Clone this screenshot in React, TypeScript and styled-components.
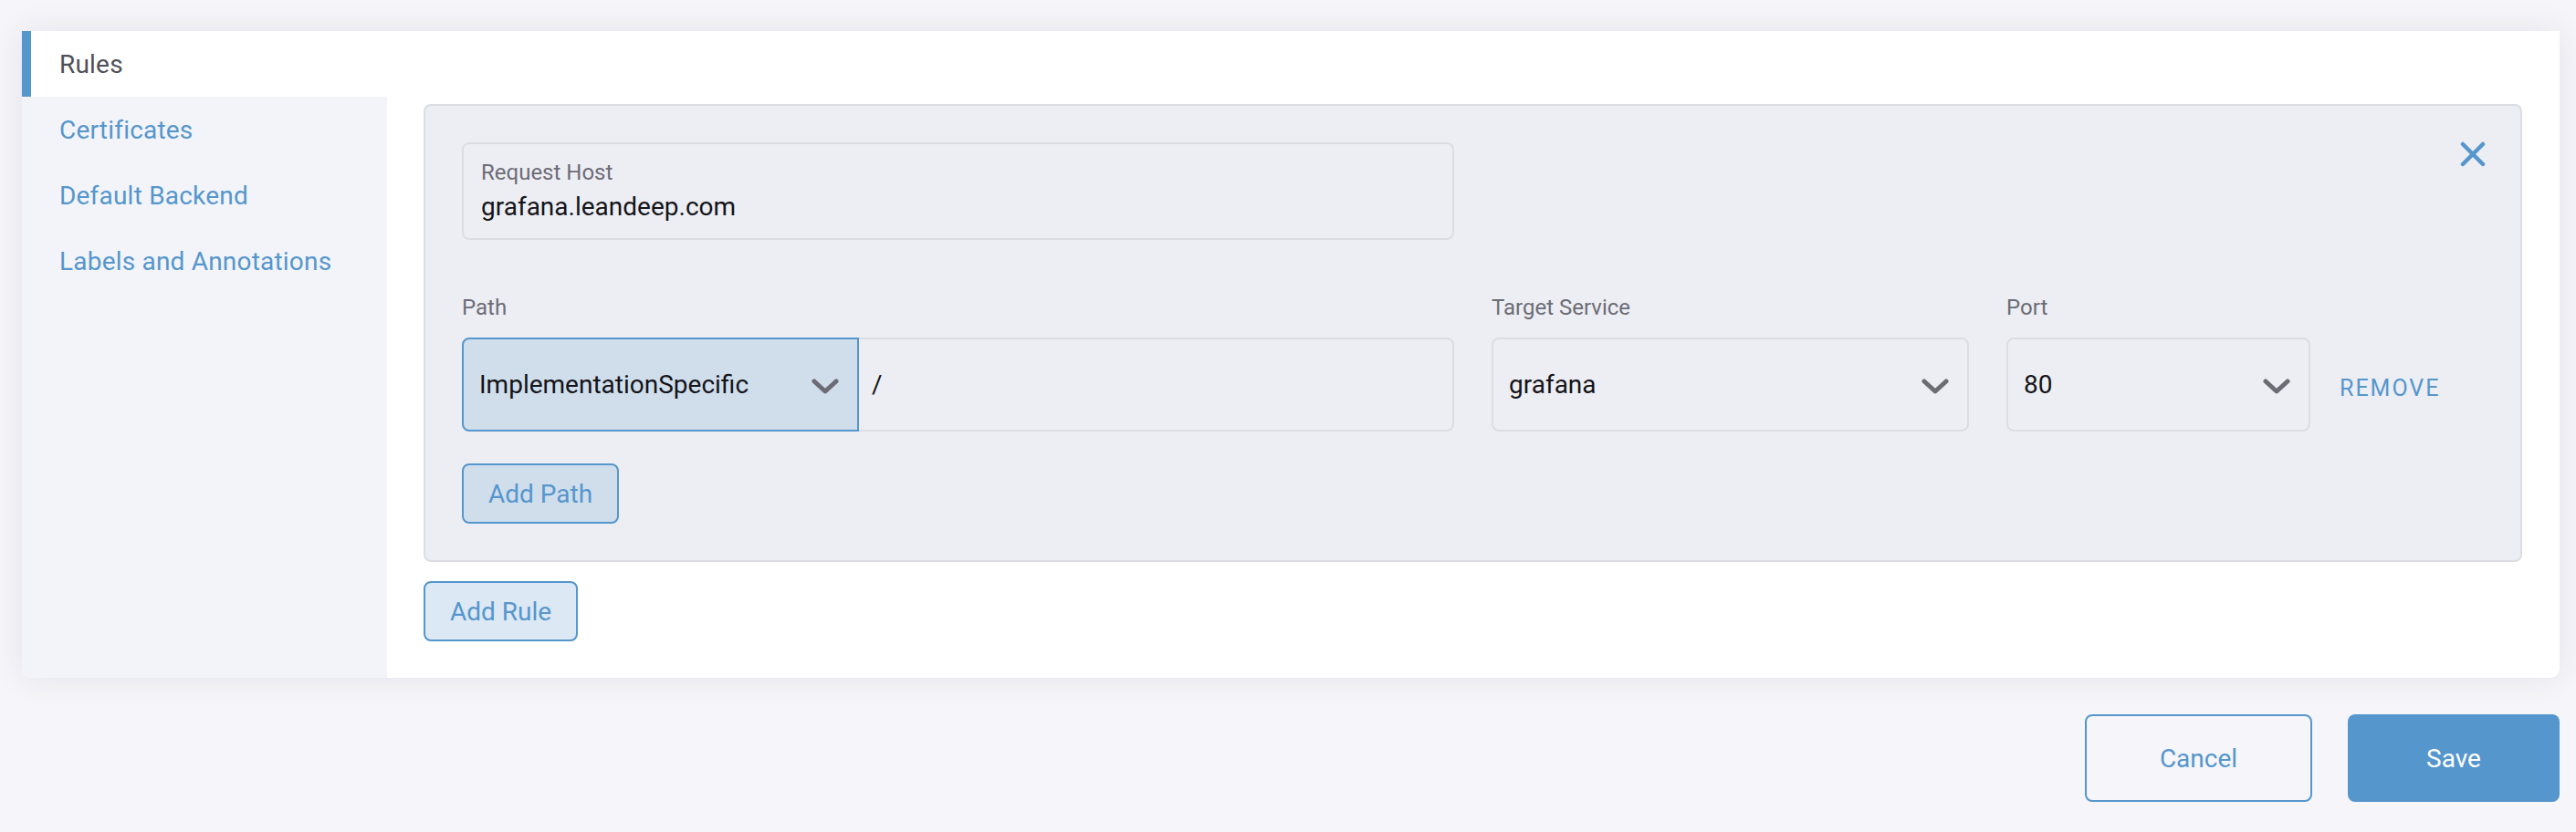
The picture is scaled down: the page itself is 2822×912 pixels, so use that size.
import React from 'react';
import styled, { createGlobalStyle } from 'styled-components';

const blue = '#5596cd';

const GlobalStyle = createGlobalStyle`
    html, body {
        margin: 0;
        padding: 0;
        background: #f5f5fa;
        font-family: Roboto, "Liberation Sans", sans-serif;
    }
    * {
        box-sizing: border-box;
    }
`

const tabs = ['Rules', 'Certificates', 'Default Backend', 'Labels and Annotations']

const Chevron = () => (
    <svg width='30' height='20' viewBox='0 0 30 20'>
        <polyline
            points='3,4 15,15 27,4'
            fill='none'
            stroke='#6c6c74'
            strokeWidth='5'
            strokeLinecap='round'
            strokeLinejoin='round'
        />
    </svg>
)

const CloseIcon = () => (
    <svg width='28' height='28' viewBox='0 0 28 28'>
        <path
            d='M3 3 L25 25 M25 3 L3 25'
            fill='none'
            stroke={blue}
            strokeWidth='4.5'
            strokeLinecap='round'
        />
    </svg>
)

export default function App() {
    return (
        <>
            <GlobalStyle />
            <Page>
                <Card>
                    <Sidebar>
                        {tabs.map((t, i) => (
                            <Tab key={t} $active={i === 0}>{t}</Tab>
                        ))}
                    </Sidebar>
                    <Content>
                        <RuleBox>
                            <HostRow>
                                <LabeledInput>
                                    <InputLabel>Request Host</InputLabel>
                                    <InputValue>grafana.leandeep.com</InputValue>
                                </LabeledInput>
                                <CloseButton>
                                    <CloseIcon />
                                </CloseButton>
                            </HostRow>

                            <PathGrid>
                                <ColLabel>Path</ColLabel>
                                <ColLabel>Target Service</ColLabel>
                                <ColLabel>Port</ColLabel>
                                <span />

                                <PathGroup>
                                    <Select $focused $width='435px'>
                                        <SelectText>ImplementationSpecific</SelectText>
                                        <Chevron />
                                    </Select>
                                    <PathInput>/</PathInput>
                                </PathGroup>
                                <Select>
                                    <SelectText>grafana</SelectText>
                                    <Chevron />
                                </Select>
                                <Select>
                                    <SelectText>80</SelectText>
                                    <Chevron />
                                </Select>
                                <RemoveLink>Remove</RemoveLink>
                            </PathGrid>

                            <AddButton>Add Path</AddButton>
                        </RuleBox>
                        <AddRuleRow>
                            <AddButton $light>Add Rule</AddButton>
                        </AddRuleRow>
                    </Content>
                </Card>

                <Footer>
                    <CancelButton>Cancel</CancelButton>
                    <SaveButton>Save</SaveButton>
                </Footer>
            </Page>
        </>
    );
}

const Page = styled.div`
    padding: 34px 18px 32px 24px;
    min-height: 912px;
    background: #f5f5fa;
`

const Card = styled.div`
    display: flex;
    background: #ffffff;
    border-radius: 0 0 10px 10px;
    box-shadow: 0 0 34px rgba(40, 40, 70, 0.09);
    overflow: hidden;
`

const Sidebar = styled.ul`
    list-style: none;
    margin: 0;
    padding: 0;
    width: 400px;
    flex-shrink: 0;
    background: #f3f4f9;
`

const Tab = styled.li<{ $active?: boolean }>`
    height: 72px;
    display: flex;
    align-items: center;
    padding-left: 31px;
    border-left: 10px solid ${p => (p.$active ? blue : 'transparent')};
    background: ${p => (p.$active ? '#ffffff' : 'transparent')};
    color: ${p => (p.$active ? '#505057' : blue)};
    font-size: 28px;
    letter-spacing: 0.2px;
`

const Content = styled.div`
    flex: 1;
    padding: 80px 41px 40px 40px;
`

const RuleBox = styled.div`
    background: #edeef3;
    border: 2px solid #dcdde3;
    border-radius: 8px;
    padding: 40px 38px 40px 40px;
`

const HostRow = styled.div`
    display: flex;
    justify-content: space-between;
    align-items: flex-start;
`

const LabeledInput = styled.div`
    width: 1087px;
    height: 107px;
    border: 2px solid #dcdde3;
    border-radius: 8px;
    padding: 18px 0 0 19px;
    display: flex;
    flex-direction: column;
`

const InputLabel = styled.span`
    font-size: 24px;
    line-height: 26px;
    color: #6c6c76;
`

const InputValue = styled.span`
    margin-top: 8px;
    font-size: 28px;
    line-height: 34px;
    color: #141419;
`

const CloseButton = styled.button`
    border: none;
    background: none;
    padding: 0;
    margin: -1px 0 0 0;
    width: 28px;
    height: 28px;
    display: flex;
`

const PathGrid = styled.div`
    display: grid;
    grid-template-columns: 1087px 523px 333px auto;
    column-gap: 41px;
    row-gap: 18px;
    align-items: center;
    margin-top: 59px;

    & > :last-child {
        margin-left: -9px;
    }
`

const ColLabel = styled.span`
    font-size: 24px;
    line-height: 30px;
    color: #6c6c76;
`

const PathGroup = styled.div`
    display: flex;
    height: 103px;
`

const Select = styled.div<{ $focused?: boolean; $width?: string }>`
    width: ${p => p.$width || '100%'};
    height: 103px;
    flex-shrink: 0;
    display: flex;
    align-items: center;
    justify-content: space-between;
    padding: 0 20px 0 17px;
    border: 2px solid ${p => (p.$focused ? blue : '#dcdde3')};
    border-radius: ${p => (p.$focused ? '8px 0 0 8px' : '8px')};
    background: ${p => (p.$focused ? '#d0deec' : '#edeef3')};

    svg {
        margin-top: 4px;
    }
`

const SelectText = styled.span`
    font-size: 28px;
    color: #141419;
`

const PathInput = styled.div`
    flex: 1;
    height: 103px;
    display: flex;
    align-items: center;
    padding-left: 14px;
    border: 2px solid #dcdde3;
    border-left: none;
    border-radius: 0 8px 8px 0;
    font-size: 28px;
    color: #141419;
`

const RemoveLink = styled.span`
    font-size: 25px;
    letter-spacing: 2px;
    text-transform: uppercase;
    color: ${blue};
    padding-top: 8px;
`

const AddButton = styled.button<{ $light?: boolean }>`
    margin-top: 35px;
    height: 66px;
    padding: 0 27px;
    border: 2px solid ${blue};
    border-radius: 8px;
    background: ${p => (p.$light ? '#dce8f4' : '#d0deec')};
    color: ${blue};
    font-family: Roboto, "Liberation Sans", sans-serif;
    font-size: 28px;
`

const AddRuleRow = styled.div`
    margin-top: -14px;
`

const Footer = styled.div`
    display: flex;
    justify-content: flex-end;
    gap: 39px;
    margin-top: 40px;
`

const CancelButton = styled.button`
    width: 249px;
    height: 96px;
    border: 2px solid ${blue};
    border-radius: 8px;
    background: transparent;
    color: ${blue};
    font-family: Roboto, "Liberation Sans", sans-serif;
    font-size: 28px;
`

const SaveButton = styled.button`
    width: 232px;
    height: 96px;
    border: none;
    border-radius: 8px;
    background: ${blue};
    color: #ffffff;
    font-family: Roboto, "Liberation Sans", sans-serif;
    font-size: 28px;
`
